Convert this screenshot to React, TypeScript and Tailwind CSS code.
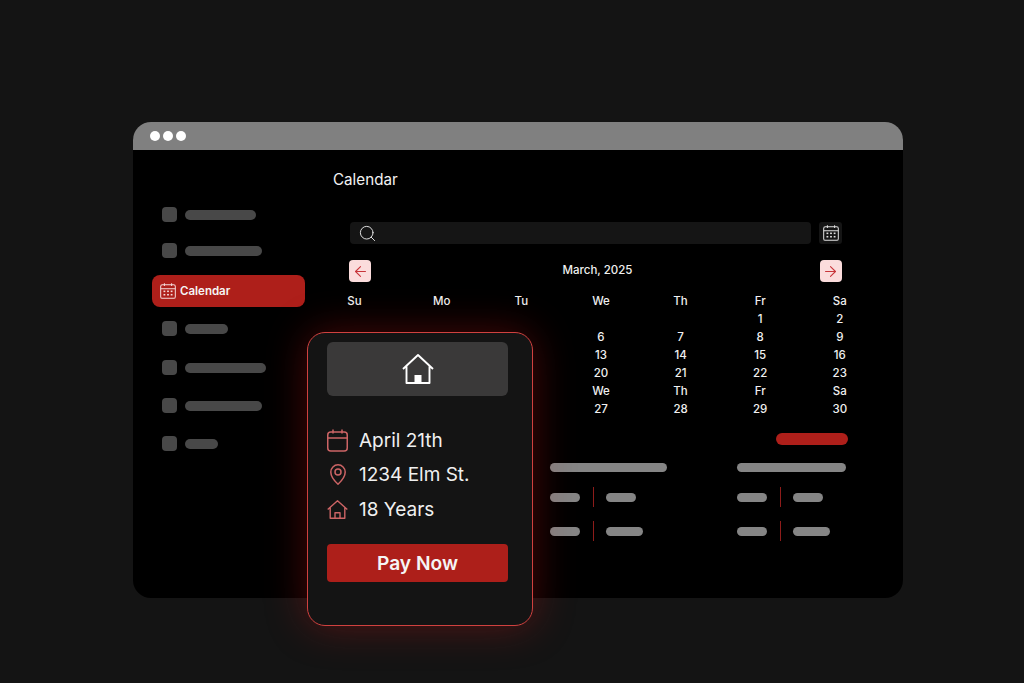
import { ArrowLeft, ArrowRight, Search } from "lucide-react";

const weekdays = ["Su", "Mo", "Tu", "We", "Th", "Fr", "Sa"];

const weeks = [
  ["", "", "", "", "", "1", "2"],
  ["", "", "", "6", "7", "8", "9"],
  ["", "", "", "13", "14", "15", "16"],
  ["", "", "", "20", "21", "22", "23"],
  ["", "", "", "We", "Th", "Fr", "Sa"],
  ["", "", "", "27", "28", "29", "30"],
];

function DottedCalendar({ className }: { className: string }) {
  return (
    <svg viewBox="0 0 16 16" fill="none" stroke="currentColor" strokeWidth="0.9" className={className}>
      <rect x="1.5" y="2.5" width="13" height="12" rx="1.5" />
      <path d="M1.5 6h13M4.8 1v2.6M11.2 1v2.6" />
      <g fill="currentColor" stroke="none">
        <rect x="4" y="7.6" width="1.6" height="1.4" />
        <rect x="7.2" y="7.6" width="1.6" height="1.4" />
        <rect x="10.4" y="7.6" width="1.6" height="1.4" />
        <rect x="4" y="10.6" width="1.6" height="1.4" />
        <rect x="7.2" y="10.6" width="1.6" height="1.4" />
        <rect x="10.4" y="10.6" width="1.6" height="1.4" />
      </g>
    </svg>
  );
}

function SideRow({ barClass }: { barClass: string }) {
  return (
    <div className="flex h-[15px] items-center pl-[29px]">
      <div className="h-[15px] w-[15px] rounded-[4px] bg-[#484848]" />
      <div className={`ml-2 h-[10px] rounded-full bg-[#484848] ${barClass}`} />
    </div>
  );
}

function BarColumn({ headClass, secondClass, className }: { headClass: string; secondClass: string; className: string }) {
  return (
    <div className={className}>
      <div className={`h-[9px] rounded-full bg-[#858585] ${headClass}`} />
      <div className="mt-[15px] flex h-[20px] items-center">
        <div className="h-[9px] w-[30px] rounded-full bg-[#858585]" />
        <div className="ml-[13px] mr-[12px] h-[20px] w-px bg-[#8e1c1a]" />
        <div className="h-[9px] w-[30px] rounded-full bg-[#858585]" />
      </div>
      <div className="mt-[14px] flex h-[20px] items-center">
        <div className="h-[9px] w-[30px] rounded-full bg-[#858585]" />
        <div className="ml-[13px] mr-[12px] h-[20px] w-px bg-[#8e1c1a]" />
        <div className={`h-[9px] rounded-full bg-[#858585] ${secondClass}`} />
      </div>
    </div>
  );
}

function PayCard() {
  return (
    <div className="absolute left-[174px] top-[210px] flex h-[294px] w-[226px] flex-col rounded-[18px] border border-[#d0413f] bg-[#141414] pl-[19px] pr-[24px] pt-[9px] shadow-[0_0_40px_rgba(190,20,20,0.38)]">
      <div className="flex h-[54px] items-center justify-center rounded-[6px] bg-[#3a3939]">
        <svg viewBox="0 0 32 30" fill="none" stroke="white" strokeWidth="1.9" className="h-[30px] w-[32px]">
          <path d="M1 15 16 1l15 14M4.5 12.5V29h23V12.5" strokeLinejoin="round" />
          <rect x="12.5" y="21" width="7" height="8" fill="white" stroke="none" />
        </svg>
      </div>
      <div className="mt-[27px] flex h-[34.5px] items-center">
        <svg viewBox="0 0 21 23" fill="none" stroke="#cc6465" strokeWidth="1.5" className="h-[23px] w-[21px]">
          <rect x="0.75" y="3" width="19.5" height="19" rx="3" />
          <path d="M0.75 9h19.5M6 0.5v4M15 0.5v4" />
        </svg>
        <span className="ml-[11px] pt-[1px] text-[19px] text-[#f0f0f0]">April 21th</span>
      </div>
      <div className="flex h-[34.5px] items-center">
        <div className="flex w-[21px] justify-center">
          <svg viewBox="0 0 16 21" fill="none" stroke="#cc6465" strokeWidth="1.5" className="h-[21px] w-[16px]">
            <path d="M8 20.2C8 20.2 0.8 13.6 0.8 8a7.2 7.2 0 0 1 14.4 0c0 5.6-7.2 12.2-7.2 12.2z" />
            <circle cx="8" cy="8" r="3" />
          </svg>
        </div>
        <span className="ml-[11px] text-[19px] text-[#f0f0f0]">1234 Elm St.</span>
      </div>
      <div className="flex h-[34.5px] items-center">
        <svg viewBox="0 0 21 19" fill="none" stroke="#cc6465" strokeWidth="1.4" className="h-[19px] w-[21px]">
          <path d="M0.7 9.5 10.5 0.8l9.8 8.7M3.2 7.5V18.3h14.6V7.5M8 18.3v-5.5h5v5.5" strokeLinejoin="round" />
        </svg>
        <span className="ml-[11px] pt-[1px] text-[19px] text-[#f0f0f0]">18 Years</span>
      </div>
      <div className="mt-[17.5px] flex h-[38px] items-center justify-center rounded-[4px] bg-[#ad1f1a] pt-[1px] text-[19.2px] font-semibold text-[#f5f5f5]">
        Pay Now
      </div>
    </div>
  );
}

export default function App() {
  return (
    <div className="h-[683px] w-[1024px] overflow-hidden bg-[#141414] pl-[133px] pt-[122px] font-['Inter',sans-serif]">
      <div className="relative h-[476px] w-[770px] rounded-[18px] bg-black">
        {/* Title bar */}
        <div className="flex h-[28px] items-center gap-[3px] rounded-t-[18px] bg-[#808080] pl-[17px]">
          <div className="h-[10px] w-[10px] rounded-full bg-white" />
          <div className="h-[10px] w-[10px] rounded-full bg-white" />
          <div className="h-[10px] w-[10px] rounded-full bg-white" />
        </div>

        <div className="flex">
          {/* Sidebar */}
          <div className="flex w-[174px] flex-col pt-[57px]">
            <SideRow barClass="w-[71px]" />
            <div className="mt-[21px]">
              <SideRow barClass="w-[77px]" />
            </div>
            <div className="ml-[19px] mt-[17px] flex h-[32px] w-[153px] items-center rounded-[8px] bg-[#ae1f1a] pl-[7px] text-[11.5px] font-semibold text-[#f5f5f5]">
              <DottedCalendar className="h-[18px] w-[18px] text-[#f5dcdc]" />
              <span className="ml-[3px] pt-[1px]">Calendar</span>
            </div>
            <div className="mt-[14px]">
              <SideRow barClass="w-[43px]" />
            </div>
            <div className="mt-[24px]">
              <SideRow barClass="w-[81px]" />
            </div>
            <div className="mt-[23px]">
              <SideRow barClass="w-[77px]" />
            </div>
            <div className="mt-[23px]">
              <SideRow barClass="w-[33px]" />
            </div>
          </div>

          {/* Main */}
          <div className="flex-1">
            <div className="pl-[26px] pt-[20px] text-[15.2px] leading-[20px] text-[#f2f2f2]">Calendar</div>

            <div className="ml-[43px] mt-[32px] flex w-[492px] gap-2">
              <div className="flex h-[22px] w-[461px] items-center rounded-[4px] bg-[#151515] pl-[8px]">
                <Search strokeWidth={1.2} className="h-[19px] w-[19px] text-[#e6e6e6]" />
              </div>
              <div className="flex h-[22px] w-[23px] items-center justify-center rounded-[3px] bg-[#151515]">
                <DottedCalendar className="h-[18px] w-[18px] text-[#e0e0e0]" />
              </div>
            </div>

            <div className="ml-[42px] mt-[16px] flex w-[493px] items-center justify-between">
              <div className="flex h-[22px] w-[22px] items-center justify-center rounded-[4px] bg-[#fbdcdc]">
                <ArrowLeft strokeWidth={1.5} className="h-[17px] w-[17px] text-[#c8353a]" />
              </div>
              <span className="pl-[4px] text-[11.5px] font-medium text-[#f0f0f0]">March, 2025</span>
              <div className="flex h-[22px] w-[22px] items-center justify-center rounded-[4px] bg-[#fbdcdc]">
                <ArrowRight strokeWidth={1.5} className="h-[17px] w-[17px] text-[#c8353a]" />
              </div>
            </div>

            <div className="mt-[10px] grid grid-cols-[95px_repeat(6,79.6px)] text-center text-[11.5px] font-medium leading-[18px] text-[#f0f0f0]">
              {weekdays.map((d) => (
                <div key={d}>{d}</div>
              ))}
              {weeks.flat().map((d, i) => (
                <div key={i}>{d}</div>
              ))}
            </div>

            <div className="ml-[469px] mt-[15px] h-[12px] w-[72px] rounded-full bg-[#ae1f1a]" />

            <div className="ml-[243px] mt-[18px] flex">
              <BarColumn className="w-[187px]" headClass="w-[117px]" secondClass="w-[37px]" />
              <BarColumn className="w-[109px]" headClass="w-[109px]" secondClass="w-[37px]" />
            </div>
          </div>
        </div>

        <PayCard />
      </div>
    </div>
  );
}
